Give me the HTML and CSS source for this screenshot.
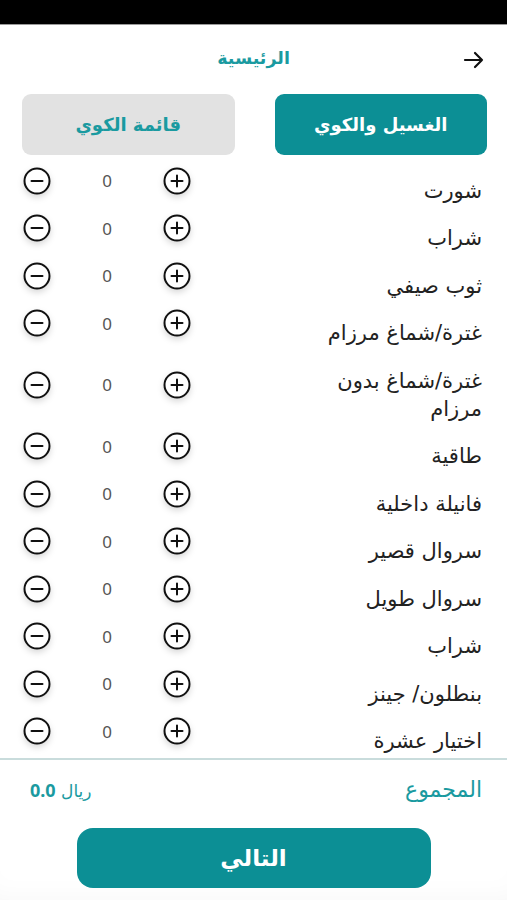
FILE: index.html
```html
<!DOCTYPE html>
<html lang="ar" dir="rtl">
  <head>
    <meta charset="UTF-8" />
    <meta name="viewport" content="width=device-width, initial-scale=1.0" />
    <title>الغسيل والكوي</title>
    <link rel="stylesheet" href="styles.css">
  </head>
  <body>
    <div class="app">
      <div class="status-bar"></div>

      <div class="header">
        <svg class="back" width="22" height="22" viewBox="0 0 22 22">
          <path d="M2 11h17M12 4l7 7-7 7" fill="none" stroke="#111" stroke-width="2.2" stroke-linecap="round" stroke-linejoin="round" />
        </svg>
        <h1>الرئيسية</h1>
      </div>

      <div class="tabs">
        <button class="tab active">الغسيل والكوي</button>
        <button class="tab">قائمة الكوي</button>
      </div>

      <div class="list" id="list"></div>

      <div class="footer">
        <div class="total">
          <span class="total-label">المجموع</span>
          <span class="total-value">ريال <b id="total">0.0</b></span>
        </div>
        <button class="next">التالي</button>
      </div>
    </div>

    <script>
      const items = [
        "شورت",
        "شراب",
        "ثوب صيفي",
        "غترة/شماغ مرزام",
        "غترة/شماغ بدون مرزام",
        "طاقية",
        "فانيلة داخلية",
        "سروال قصير",
        "سروال طويل",
        "شراب",
        "بنطلون/ جينز",
        "اختيار عشرة",
      ];

      const minusIcon =
        '<svg width="28" height="28" viewBox="0 0 28 28"><circle cx="14" cy="14" r="12.5" fill="#fff" stroke="#111" stroke-width="2"/><path d="M8.5 14h11" stroke="#111" stroke-width="2" stroke-linecap="round"/></svg>';
      const plusIcon =
        '<svg width="28" height="28" viewBox="0 0 28 28"><circle cx="14" cy="14" r="12.5" fill="#fff" stroke="#111" stroke-width="2"/><path d="M8.5 14h11M14 8.5v11" stroke="#111" stroke-width="2" stroke-linecap="round"/></svg>';

      const list = document.getElementById("list");
      items.forEach((name) => {
        const row = document.createElement("div");
        row.className = "row";
        row.innerHTML =
          '<div class="name">' + name + "</div>" +
          '<div class="counter">' +
          '<span class="btn">' + minusIcon + "</span>" +
          '<span class="count">0</span>' +
          '<span class="btn">' + plusIcon + "</span>" +
          "</div>";
        list.appendChild(row);
      });
    </script>
  </body>
</html>
```

FILE: styles.css
```css
* {
  box-sizing: border-box;
}

body {
  margin: 0;
  font-family: "DejaVu Sans", "Noto Sans", sans-serif;
  background-color: #fff;
  color: #222;
}

.app {
  width: 507px;
  height: 900px;
  display: flex;
  flex-direction: column;
  overflow: hidden;
}

.status-bar {
  height: 25px;
  background-color: #000;
  border-bottom: 1px solid #9a9a9a;
  flex-shrink: 0;
}

.header {
  height: 69px;
  position: relative;
  display: flex;
  align-items: center;
  justify-content: center;
  flex-shrink: 0;
}

.header h1 {
  margin: 0 0 3px 0;
  font-size: 17.5px;
  font-weight: bold;
  color: #1a9aa0;
}

.back {
  position: absolute;
  right: 22px;
  top: 24px;
}

.tabs {
  display: flex;
  gap: 40px;
  padding: 0 20px 0 22px;
  flex-shrink: 0;
}

.tab {
  flex: 1;
  height: 61px;
  border: none;
  border-radius: 9px;
  background-color: #e2e2e2;
  color: #1a9aa0;
  font-family: inherit;
  font-size: 18px;
  font-weight: bold;
  cursor: pointer;
}

.tab.active {
  background-color: #0c8f95;
  color: #fff;
}

.list {
  flex: 1;
  overflow: hidden;
  padding-top: 2px;
  border-bottom: 2px solid #c9dcdc;
}

.row {
  display: flex;
  justify-content: space-between;
  align-items: center;
  padding: 0 25px 0 24px;
}

.name {
  padding-top: 19.5px;
  line-height: 28px;
  font-size: 21px;
  max-width: 180px;
  color: #222;
}

.counter {
  direction: ltr;
  width: 168px;
  display: grid;
  grid-template-columns: 28px 1fr 28px;
  align-items: center;
  margin-left: -1px;
}

.btn {
  display: flex;
  filter: drop-shadow(0 3px 3px rgba(0, 0, 0, 0.15));
  cursor: pointer;
}

.count {
  text-align: center;
  font-family: "Noto Sans", sans-serif;
  font-size: 17px;
  color: #555;
}

.footer {
  height: 140px;
  flex-shrink: 0;
  padding: 17px 25px 0 25px;
  box-shadow: inset 0 -20px 30px -20px rgba(0, 0, 0, 0.04);
}

.total {
  display: flex;
  justify-content: space-between;
  align-items: center;
  font-size: 22px;
  color: #1a9aa0;
}

.total-value {
  font-size: 17px;
  margin-left: 5px;
}

.total-value b {
  font-family: "Noto Sans", sans-serif;
  font-size: 18px;
}

.next {
  display: block;
  width: 354px;
  height: 60px;
  margin: 26px auto 0 auto;
  border: none;
  border-radius: 16px;
  background-color: #0c8f95;
  color: #fff;
  font-family: inherit;
  font-size: 23px;
  font-weight: bold;
  cursor: pointer;
}
```
